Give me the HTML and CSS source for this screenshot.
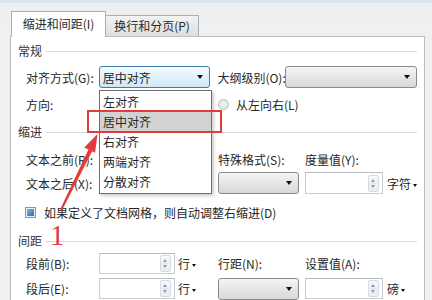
FILE: index.html
```html
<!DOCTYPE html>
<html lang="zh-CN">
<head>
  <meta charset="UTF-8">
  <title>段落</title>
  <link rel="stylesheet" href="styles.css">
</head>
<body>
  <div class="window">
    <div class="tabs">
      <div class="tab active">缩进和间距(I)</div>
      <div class="tab">换行和分页(P)</div>
    </div>

    <div class="panel">
      <!-- 常规 -->
      <div class="group-title"><span>常规</span></div>
      <div class="row row-general">
        <span class="label">对齐方式(G):</span>
        <div class="combo focus combo-align"><span>居中对齐</span><i class="caret"></i></div>
        <span class="label label-outline">大纲级别(O):</span>
        <div class="combo combo-outline"><span></span><i class="caret"></i></div>
      </div>
      <div class="row row-direction">
        <span class="label">方向:</span>
        <!-- 被下拉列表盖住的第一个单选 -->
        <span class="radio radio-rtl"><i class="dot"></i></span>
        <label class="radio"><i class="dot"></i>从左向右(L)</label>
      </div>

      <!-- 缩进 -->
      <div class="group-title title-indent"><span>缩进</span></div>
      <div class="grid grid-indent">
        <span class="label">文本之前(R):</span>
        <div class="spin"><span></span><i class="spin-btn"></i></div>
        <span class="unit">字符<i class="caret small"></i></span>
        <span class="label">特殊格式(S):</span>
        <span class="label">度量值(Y):</span>
        <span></span>

        <span class="label">文本之后(X):</span>
        <div class="spin"><span></span><i class="spin-btn"></i></div>
        <span class="unit">字符<i class="caret small"></i></span>
        <div class="combo combo-small"><span></span><i class="caret"></i></div>
        <div class="spin spin-right"><span></span><i class="spin-btn"></i></div>
        <span class="unit">字符<i class="caret small"></i></span>
      </div>
      <div class="row row-check">
        <i class="checkbox"></i>
        <span>如果定义了文档网格，则自动调整右缩进(D)</span>
      </div>

      <!-- 间距 -->
      <div class="group-title title-spacing"><span>间距</span></div>
      <div class="grid grid-spacing">
        <span class="label">段前(B):</span>
        <div class="spin"><span></span><i class="spin-btn"></i></div>
        <span class="unit">行<i class="caret small"></i></span>
        <span class="label">行距(N):</span>
        <span class="label">设置值(A):</span>
        <span></span>

        <span class="label">段后(E):</span>
        <div class="spin"><span></span><i class="spin-btn"></i></div>
        <span class="unit">行<i class="caret small"></i></span>
        <div class="combo combo-small"><span></span><i class="caret"></i></div>
        <div class="spin spin-right"><span></span><i class="spin-btn"></i></div>
        <span class="unit">磅<i class="caret small"></i></span>
      </div>
    </div>

    <!-- 展开的下拉列表 -->
    <ul class="dropdown">
      <li>左对齐</li>
      <li class="hover">居中对齐</li>
      <li>右对齐</li>
      <li>两端对齐</li>
      <li>分散对齐</li>
    </ul>

    <!-- 标注 -->
    <div class="mark-box"></div>
    <svg class="mark-arrow" width="432" height="300" viewBox="0 0 432 300">
      <polygon points="61.9,207.4 60.1,206.6 88.7,146.1 92.3,147.9" fill="#e33b3b"/>
      <polygon points="97.5,131 95.1,149.8 84.3,144.6" fill="#e33b3b"/>
    </svg>
    <span class="mark-num">1</span>
  </div>
</body>
</html>
```

FILE: styles.css
```css
body {
    margin: 0;
    font-family: "Noto Sans CJK SC", "Noto Sans", sans-serif;
    font-size: 12px;
    color: #262626;
    background-color: #eef0f2;
}
.window {
    position: relative;
    width: 432px;
    height: 300px;
    overflow: hidden;
    box-sizing: border-box;
    padding: 11px 0 0 10px;
    border-top: 3px solid #d9e3ec;
    background: linear-gradient(#eceff2, #f0f0f0 40px);
}
.tabs {
    display: flex;
    align-items: flex-end;
    padding-left: 1px;
    margin-top: -3px;
    height: 25px;
    position: relative;
    z-index: 2;
}
.tab {
    box-sizing: border-box;
    height: 21px;
    width: 94px;
    line-height: 19px;
    text-align: center;
    border: 1px solid #a7afb8;
    border-bottom: none;
    background: linear-gradient(#f3f3f3, #dedede);
    color: #2a2a2a;
    margin-left: -1px;
}
.tab.active {
    height: 26px;
    width: 95px;
    line-height: 24px;
    background: #ffffff;
    margin-left: 0;
    margin-bottom: -1px;
}
.panel {
    box-sizing: border-box;
    width: 415px;
    height: 280px;
    background: #ffffff;
    border: 1px solid #b7bec6;
    padding: 0 7px;
}

/* 分组标题 */
.group-title {
    display: flex;
    align-items: center;
    height: 16px;
    line-height: 16px;
    margin-top: 6px;
    color: #333;
}
.group-title::after {
    content: "";
    flex: 1;
    height: 1px;
    background: #d8dde2;
    margin-left: 4px;
}
.title-indent {
    margin-top: 9px;
}
.title-spacing {
    margin-top: 11px;
}

.row {
    display: flex;
    align-items: center;
    height: 22px;
    padding-left: 8px;
}
.row-general {
    margin-top: 7px;
}
.row-direction {
    margin-top: 5px;
}
.label {
    white-space: nowrap;
}
.row .label:first-child {
    width: 73px;
}
.label-outline {
    margin-left: 7px;
    width: 68px;
}

/* 下拉框 */
.combo {
    box-sizing: border-box;
    height: 22px;
    display: flex;
    align-items: center;
    justify-content: space-between;
    padding: 0 6px 0 3px;
    border: 1px solid #8a8a8a;
    border-radius: 3px;
    background: linear-gradient(#f5f5f5, #e6e6e6 50%, #d8d8d8);
}
.combo.focus {
    border-color: #3c7fb1;
    background: linear-gradient(#f4fafd, #e2f2fb 50%, #cfe8f7);
}
.combo-align {
    width: 112px;
}
.combo-outline {
    width: 132px;
}
.combo-small {
    width: 81px;
    height: 22px;
}
.caret {
    width: 0;
    height: 0;
    border-left: 3.5px solid transparent;
    border-right: 3.5px solid transparent;
    border-top: 4px solid #111;
}
.caret.small {
    display: inline-block;
    margin-left: 2px;
    vertical-align: middle;
    border-left-width: 2.5px;
    border-right-width: 2.5px;
    border-top-width: 3px;
}

/* 单选 */
.radio {
    display: flex;
    align-items: center;
    white-space: nowrap;
}
.radio-rtl {
    width: 119px;
}
.dot {
    box-sizing: border-box;
    width: 11px;
    height: 11px;
    border-radius: 50%;
    border: 1px solid #b9bfc6;
    background: radial-gradient(#f4f4f4, #d9dde2);
    margin-right: 7px;
}

/* 网格行 */
.grid {
    display: grid;
    grid-template-columns: 73px 76px 43px 87px 80px 1fr;
    align-items: center;
    padding-left: 8px;
}
.grid-indent {
    margin-top: 8px;
    grid-auto-rows: 22px;
    row-gap: 2px;
}
.grid-spacing {
    margin-top: 4px;
    grid-auto-rows: 21px;
    row-gap: 4px;
}
.spin {
    box-sizing: border-box;
    height: 100%;
    display: flex;
    justify-content: flex-end;
    align-items: center;
    border: 1px solid #c9cdd2;
    border-top-color: #b5bac0;
    background: #fff;
    padding-right: 3px;
}
.spin-right {
    width: 78px;
}
.spin-btn {
    width: 9px;
    height: 15px;
    border: 1px solid #d6dbe1;
    border-radius: 2px;
    background:
        linear-gradient(#dfe5eb, #dfe5eb) center / 7px 1px no-repeat,
        linear-gradient(#f7f9fb, #e8edf2);
    position: relative;
}
.spin-btn::before,
.spin-btn::after {
    content: "";
    position: absolute;
    left: 2px;
    border-left: 2.5px solid transparent;
    border-right: 2.5px solid transparent;
}
.spin-btn::before {
    top: 3px;
    border-bottom: 3px solid #8e9aa8;
}
.spin-btn::after {
    bottom: 3px;
    border-top: 3px solid #8e9aa8;
}
.unit {
    padding-left: 3px;
    white-space: nowrap;
}
.grid .unit:last-child {
    padding-left: 2px;
}

/* 复选框 */
.row-check {
    margin-top: 8px;
    height: 20px;
    padding-left: 7px;
}
.checkbox {
    box-sizing: border-box;
    width: 11px;
    height: 11px;
    border: 1px solid #8f959c;
    padding: 1px;
    background: #eef1f4;
    margin-right: 8px;
    position: relative;
}
.checkbox::after {
    content: "";
    position: absolute;
    inset: 1px;
    background: linear-gradient(135deg, #7ab8e0, #2c6fae);
}

/* 展开的列表 */
.dropdown {
    position: absolute;
    left: 99px;
    top: 87px;
    width: 113px;
    margin: 0;
    padding: 1px 0;
    list-style: none;
    box-sizing: border-box;
    background: #fff;
    border: 1px solid #6f6f6f;
    box-shadow: 2px 2px 3px rgba(0, 0, 0, 0.2);
    z-index: 5;
}
.dropdown li {
    height: 20px;
    line-height: 20px;
    padding-left: 3px;
}
.dropdown li.hover {
    background: #d2d2d2;
}

/* 红色标注 */
.mark-box {
    position: absolute;
    left: 87px;
    top: 107px;
    width: 135px;
    height: 23px;
    box-sizing: border-box;
    border: 2.5px solid #e33b3b;
    z-index: 6;
}
.mark-arrow {
    position: absolute;
    left: 0;
    top: 0;
    z-index: 7;
    pointer-events: none;
}
.mark-num {
    position: absolute;
    left: 50px;
    top: 222px;
    font-family: "Liberation Serif", serif;
    font-size: 29px;
    line-height: 20px;
    color: #e03c3c;
    z-index: 7;
}
```
